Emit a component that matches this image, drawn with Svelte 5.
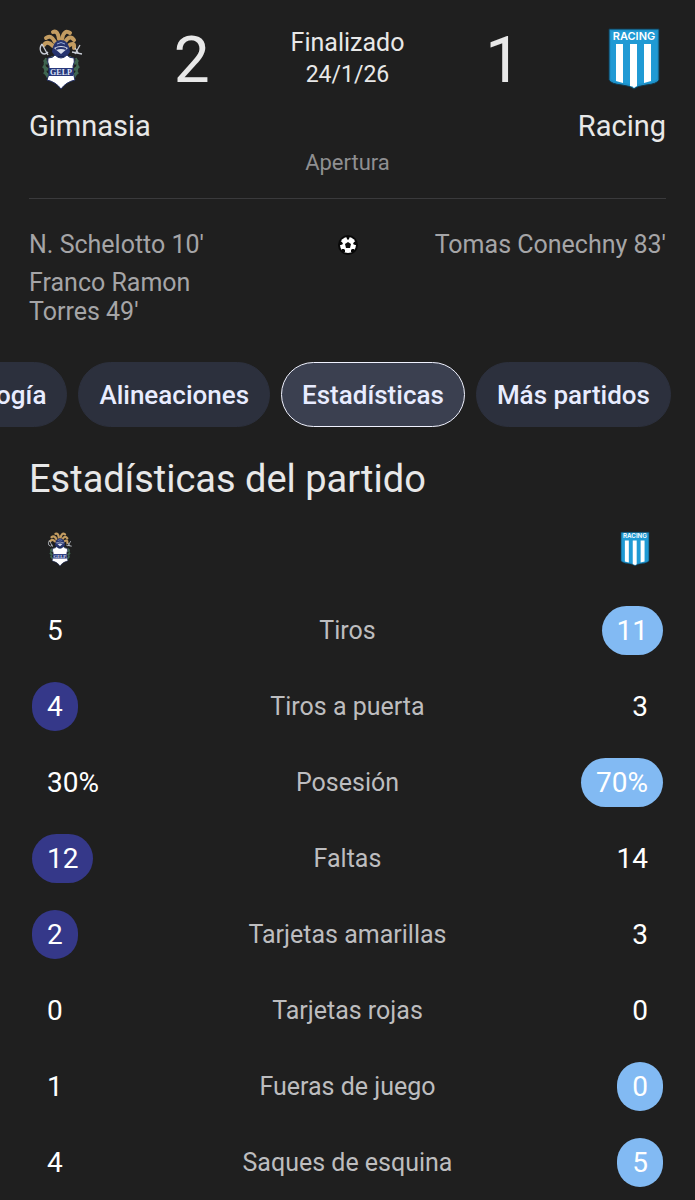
<script lang="ts">
	interface Stat {
		label: string;
		home: string;
		away: string;
		lead?: 'home' | 'away';
	}

	const tabs = ['Cronología', 'Alineaciones', 'Estadísticas', 'Más partidos'];
	let active = $state('Estadísticas');

	const homeGoals = ["N. Schelotto 10'", "Franco Ramon Torres 49'"];
	const awayGoals = ["Tomas Conechny 83'"];

	const stats: Stat[] = [
		{ label: 'Tiros', home: '5', away: '11', lead: 'away' },
		{ label: 'Tiros a puerta', home: '4', away: '3', lead: 'home' },
		{ label: 'Posesión', home: '30%', away: '70%', lead: 'away' },
		{ label: 'Faltas', home: '12', away: '14', lead: 'home' },
		{ label: 'Tarjetas amarillas', home: '2', away: '3', lead: 'home' },
		{ label: 'Tarjetas rojas', home: '0', away: '0' },
		{ label: 'Fueras de juego', home: '1', away: '0', lead: 'away' },
		{ label: 'Saques de esquina', home: '4', away: '5', lead: 'away' }
	];
</script>

{#snippet gimnasia()}
	<svg class="crest" viewBox="0 0 64 64" role="img" aria-label="Gimnasia">
		<g fill="none" stroke="#c39c61" stroke-width="4" stroke-linecap="round">
			<path d="M24 19q-6-6-9-1" />
			<path d="M26 15q-4-8-9-4" />
			<path d="M30 12q-1-9-6-7" />
			<path d="M33 12q2-10 8-6" />
			<path d="M36 15q5-8 9-2" />
			<path d="M39 19q7-5 6 2" />
		</g>
		<path d="M23 25q1-12 9-12t9 12l-3 4H26z" fill="#26346f" />
		<path d="M25 21q7-4 14 0l-7 6z" fill="#d9deea" />
		<path d="M27 22q5-2 10 0" stroke="#26346f" stroke-width="2" fill="none" />
		<path d="M28 17q4-3 8 0" stroke="#91a6d6" stroke-width="1" fill="none" />
		<path d="M22 29h20l2 5H20z" fill="#37505b" />
		<path d="M27 29h10v4H27z" fill="#162455" />
		<path d="M28 31h8" stroke="#5871ad" stroke-width="1" />
		<g fill="none" stroke="#c9cdd6" stroke-width="1.3">
			<path d="M13 17l6 11M12 25q3 4 7 0M13 17q-3 4-1 8" />
			<path d="M51 18l-5 9M43 25l10 2M46 21l4 6" />
		</g>
		<g fill="none" stroke="#3f6650" stroke-width="3">
			<path d="M20 53q-7-12-3-22M44 53q7-12 3-22" stroke-width="2" />
			<path d="M15 33l4 4M14 39l5 4M15 45l5 4M49 33l-4 4M50 39l-5 4M49 45l-5 4" />
		</g>
		<path d="M19 31q5 0 7-3 6 6 12 0 2 3 7 3 1 4-1 8 0 9 2 14-9 2-14 9-5-7-14-9 3-6 2-14-2-4-1-8z" fill="#fff" stroke="#233064" stroke-width="1" />
		<path d="M20 41h24v8H20z" fill="#27367a" />
		<text x="32" y="48" text-anchor="middle" class="gelp">GELP</text>
	</svg>
{/snippet}

{#snippet racing()}
	<svg class="crest" viewBox="0 0 64 64" role="img" aria-label="Racing">
		<path d="M7 2h50v51q-2 4-13 5-9 1-12 4-3-3-12-4Q9 57 7 53z" fill="#1d91c9" stroke="#12384c" stroke-width="1" />
		<path d="M9 4h46v48q-2 3-12 4-8 1-11 3-3-2-11-3-10-1-12-4z" fill="#209ad4" />
		<path d="M14 17h7v39l-7-2zM28 17h7v42q-2 1-3 2-1-2-4-2zM42 17h7v37l-7 2z" fill="#fff" />
		<text x="32" y="13" text-anchor="middle" class="racing-name">RACING</text>
	</svg>
{/snippet}

<main>
	<header>
		<div class="score-row">
			{@render gimnasia()}
			<span class="score">2</span>
			<div class="status">
				<div>Finalizado</div>
				<div class="date">24/1/26</div>
			</div>
			<span class="score">1</span>
			{@render racing()}
		</div>
		<div class="names">
			<span>Gimnasia</span>
			<span>Racing</span>
		</div>
		<div class="round">Apertura</div>
	</header>

	<section class="goals">
		<ul>
			{#each homeGoals as goal}
				<li>{goal}</li>
			{/each}
		</ul>
		<svg class="ball" viewBox="0 0 20 20" aria-hidden="true">
			<circle cx="10" cy="10" r="10" fill="#080808" />
			<circle cx="10" cy="10" r="8" fill="#fff" />
			<path d="M10 7l3 2-1 4H8L7 9z" fill="#111" />
			<path d="M8 1h4l-1 3-1 1-1-1zM18 6l1 4-2 0-2-1 1-2zM16 17l-3 0 0-2 1-1 2 0zM4 17l3 0 0-2-1-1-2 0zM2 6l-1 4 2 0 2-1-1-2z" fill="#080808" />
		</svg>
		<ul class="away">
			{#each awayGoals as goal}
				<li>{goal}</li>
			{/each}
		</ul>
	</section>

	<nav class="tabs">
		{#each tabs as tab}
			<button class:active={active === tab} onclick={() => (active = tab)}>{tab}</button>
		{/each}
	</nav>

	<section class="stats">
		<h2>Estadísticas del partido</h2>
		<table>
			<thead>
				<tr>
					<th scope="col">{@render gimnasia()}</th>
					<td></td>
					<th scope="col" class="right">{@render racing()}</th>
				</tr>
			</thead>
			<tbody>
				{#each stats as stat}
					<tr>
						<td><span class="value" class:home={stat.lead === 'home'}>{stat.home}</span></td>
						<th scope="row">{stat.label}</th>
						<td class="right"><span class="value" class:away={stat.lead === 'away'}>{stat.away}</span></td>
					</tr>
				{/each}
			</tbody>
		</table>
	</section>
</main>

<style>
	:global(body) {
		background: #1f1f1f;
	}

	main {
		color: #e8e8e8;
		font-family: Roboto, sans-serif;
		overflow: hidden;
	}

	header {
		margin: 0 29px;
		padding-top: 27px;
		border-bottom: 1px solid #3a3a3c;
	}

	.score-row {
		display: grid;
		grid-template-columns: 64px 1fr auto 1fr 64px;
		grid-template-rows: 64px;
		align-items: center;
	}

	.crest {
		display: block;
		width: 64px;
		height: 64px;
	}

	.gelp {
		font: 700 8px 'Liberation Serif', serif;
		fill: #dce2f4;
	}

	.racing-name {
		font: 600 11px Inter, sans-serif;
		fill: #fff;
	}

	.score {
		padding-top: 4px;
		font-size: 64px;
		line-height: 64px;
		text-align: center;
	}

	.status {
		font-size: 25px;
		line-height: 32px;
		text-align: center;
	}

	.date {
		font-size: 23px;
	}

	.names {
		display: flex;
		justify-content: space-between;
		margin-top: 17px;
		font-size: 29px;
		line-height: 36px;
	}

	.round {
		padding: 5px 0 21px;
		color: #8f8f91;
		font-size: 22px;
		line-height: 28px;
		text-align: center;
	}

	.goals {
		display: grid;
		grid-template-columns: 1fr 20px 1fr;
		margin: 31px 29px 0;
		color: #a5a5a7;
		font-size: 25px;
		line-height: 29px;
	}

	ul {
		display: flex;
		flex-direction: column;
		gap: 9px;
		margin: 0;
		padding: 0 80px 0 0;
		list-style: none;
	}

	ul.away {
		padding: 0;
		text-align: right;
	}

	.ball {
		width: 20px;
		height: 20px;
		margin-top: 5px;
	}

	.tabs {
		display: flex;
		justify-content: flex-end;
		gap: 11px;
		margin-top: 36px;
		padding-right: 24px;
	}

	button {
		flex: none;
		height: 65px;
		padding: 0 20px;
		border: 1px solid #2c303d;
		border-radius: 33px;
		background: #2c303d;
		color: #e8ecff;
		font: 500 26px Roboto, sans-serif;
		cursor: pointer;
	}

	button.active {
		border-color: #f0f2ff;
		background: #3b4050;
	}

	h2 {
		margin: 30px 29px 0;
		font-size: 38px;
		font-weight: 400;
		line-height: 44px;
	}

	.stats {
		padding-bottom: 8px;
	}

	table {
		width: calc(100% - 64px);
		margin: 30px 32px 0;
		border-collapse: collapse;
		table-layout: fixed;
	}

	th,
	td {
		padding: 0;
		text-align: left;
	}

	tbody tr {
		height: 76px;
	}

	thead tr {
		height: 61px;
		vertical-align: top;
	}

	thead .crest {
		width: 36px;
		height: 36px;
		margin-left: 10px;
	}

	thead .right .crest {
		margin: 0 10px 0 auto;
	}

	.right {
		text-align: right;
	}

	tbody th {
		padding-top: 2px;
		color: #bdbdbf;
		font-size: 25px;
		font-weight: 400;
		line-height: 32px;
		text-align: center;
	}

	.value {
		display: inline-block;
		padding: 0 15px;
		border-radius: 25px;
		color: #fff;
		font-size: 28px;
		line-height: 49px;
		vertical-align: middle;
	}

	.value.home {
		background: #353889;
	}

	.value.away {
		background: #82baf3;
	}
</style>
